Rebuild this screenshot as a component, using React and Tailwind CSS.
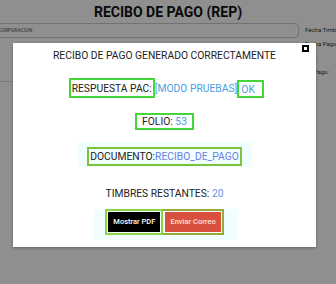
import React from "react";

const App = () => {
  return (
    <div className="relative w-[336px] h-[284px] overflow-hidden bg-white font-['Roboto',sans-serif] text-[#222]">
      {/* page behind the modal */}
      <div className="flex flex-col">
        <h1 className="text-center text-[14px] font-bold leading-[18px] mt-[3px] text-[#111]">RECIBO DE PAGO (REP)</h1>
        <div className="flex mt-[2px]">
          <div className="shrink-0 w-[303px] h-[15px] border border-[#ccc] rounded-sm text-[5px] leading-[13px] pl-[1px] text-[#555] -ml-[4px]">
            CORPORACION
          </div>
          <div className="flex flex-col text-[6px] leading-[14px] pl-[6px] text-[#333] whitespace-nowrap">
            <span>Fecha Timbrado:</span>
            <span>Fecha Pago:</span>
            <span className="-ml-[10px]">Usuario:</span>
            <span className="-ml-[10px]">Forma Pago:</span>
          </div>
        </div>
        <div className="h-px bg-[#ddd] mt-[2px] w-[299px]" />
      </div>

      {/* overlay */}
      <div className="absolute inset-0 bg-black/[0.44]" />

      {/* modal */}
      <div className="absolute left-[13px] top-[43px] w-[303px] h-[204px] bg-white shadow-[0_1px_3px_rgba(0,0,0,0.3)] flex flex-col items-center text-[10.3px]">
        <div className="absolute right-[7px] top-[2px] w-[7px] h-[7px] bg-black flex items-center justify-center">
          <div className="w-[3px] h-[3px] bg-white" />
        </div>
        <p className="mt-[5px] leading-[16px]">RECIBO DE PAGO GENERADO CORRECTAMENTE</p>

        <div className="flex items-end mt-[14px] ml-[4px]">
          <span className="border-2 border-[#43d63c] h-[20px] px-[1px] leading-[17px]">RESPUESTA PAC:</span>
          <span className="text-[#4aa0e0] leading-[16px] mb-[1px]">[MODO PRUEBAS]</span>
          <span className="border-2 border-[#43d63c] h-[18px] px-[2px] leading-[15px] text-[#4aa0e0] w-[27px]">OK</span>
        </div>

        <div className="mt-[15px] border-2 border-[#43d63c] h-[17px] px-[5px] leading-[14px]">
          FOLIO: <span className="text-[#4aa0e0]">53</span>
        </div>

        <div className="mt-[12px] bg-[#f0feff] w-[175px] h-[25px] flex justify-center items-end pb-[1px]">
          <div className="border-2 border-[#7cc33a] h-[19px] px-[1px] leading-[16px]">
            DOCUMENTO:<span className="text-[#6b7ee0]">RECIBO_DE_PAGO</span>
          </div>
        </div>

        <p className="mt-[19px] leading-[16px]">
          TIMBRES RESTANTES: <span className="text-[#6b8fe0]">20</span>
        </p>

        <div className="mt-[7px] bg-[#f0feff] w-[144px] h-[31px] flex justify-center">
          <div className="flex h-[26px]">
            <div className="border-2 border-[#8fd43f] flex items-center p-[1px]">
              <div className="bg-black text-white text-[7.5px] font-medium h-full flex items-center px-[5px]">Mostrar PDF</div>
            </div>
            <div className="border-2 border-l-0 border-[#9aa839] flex items-center p-[1px]">
              <div className="bg-[#d9503f] text-[#ffe0d8] text-[7.5px] font-medium h-full flex items-center px-[5px] ml-[1px]">Enviar Correo</div>
            </div>
          </div>
        </div>
      </div>
    </div>
  );
};

export default App;
